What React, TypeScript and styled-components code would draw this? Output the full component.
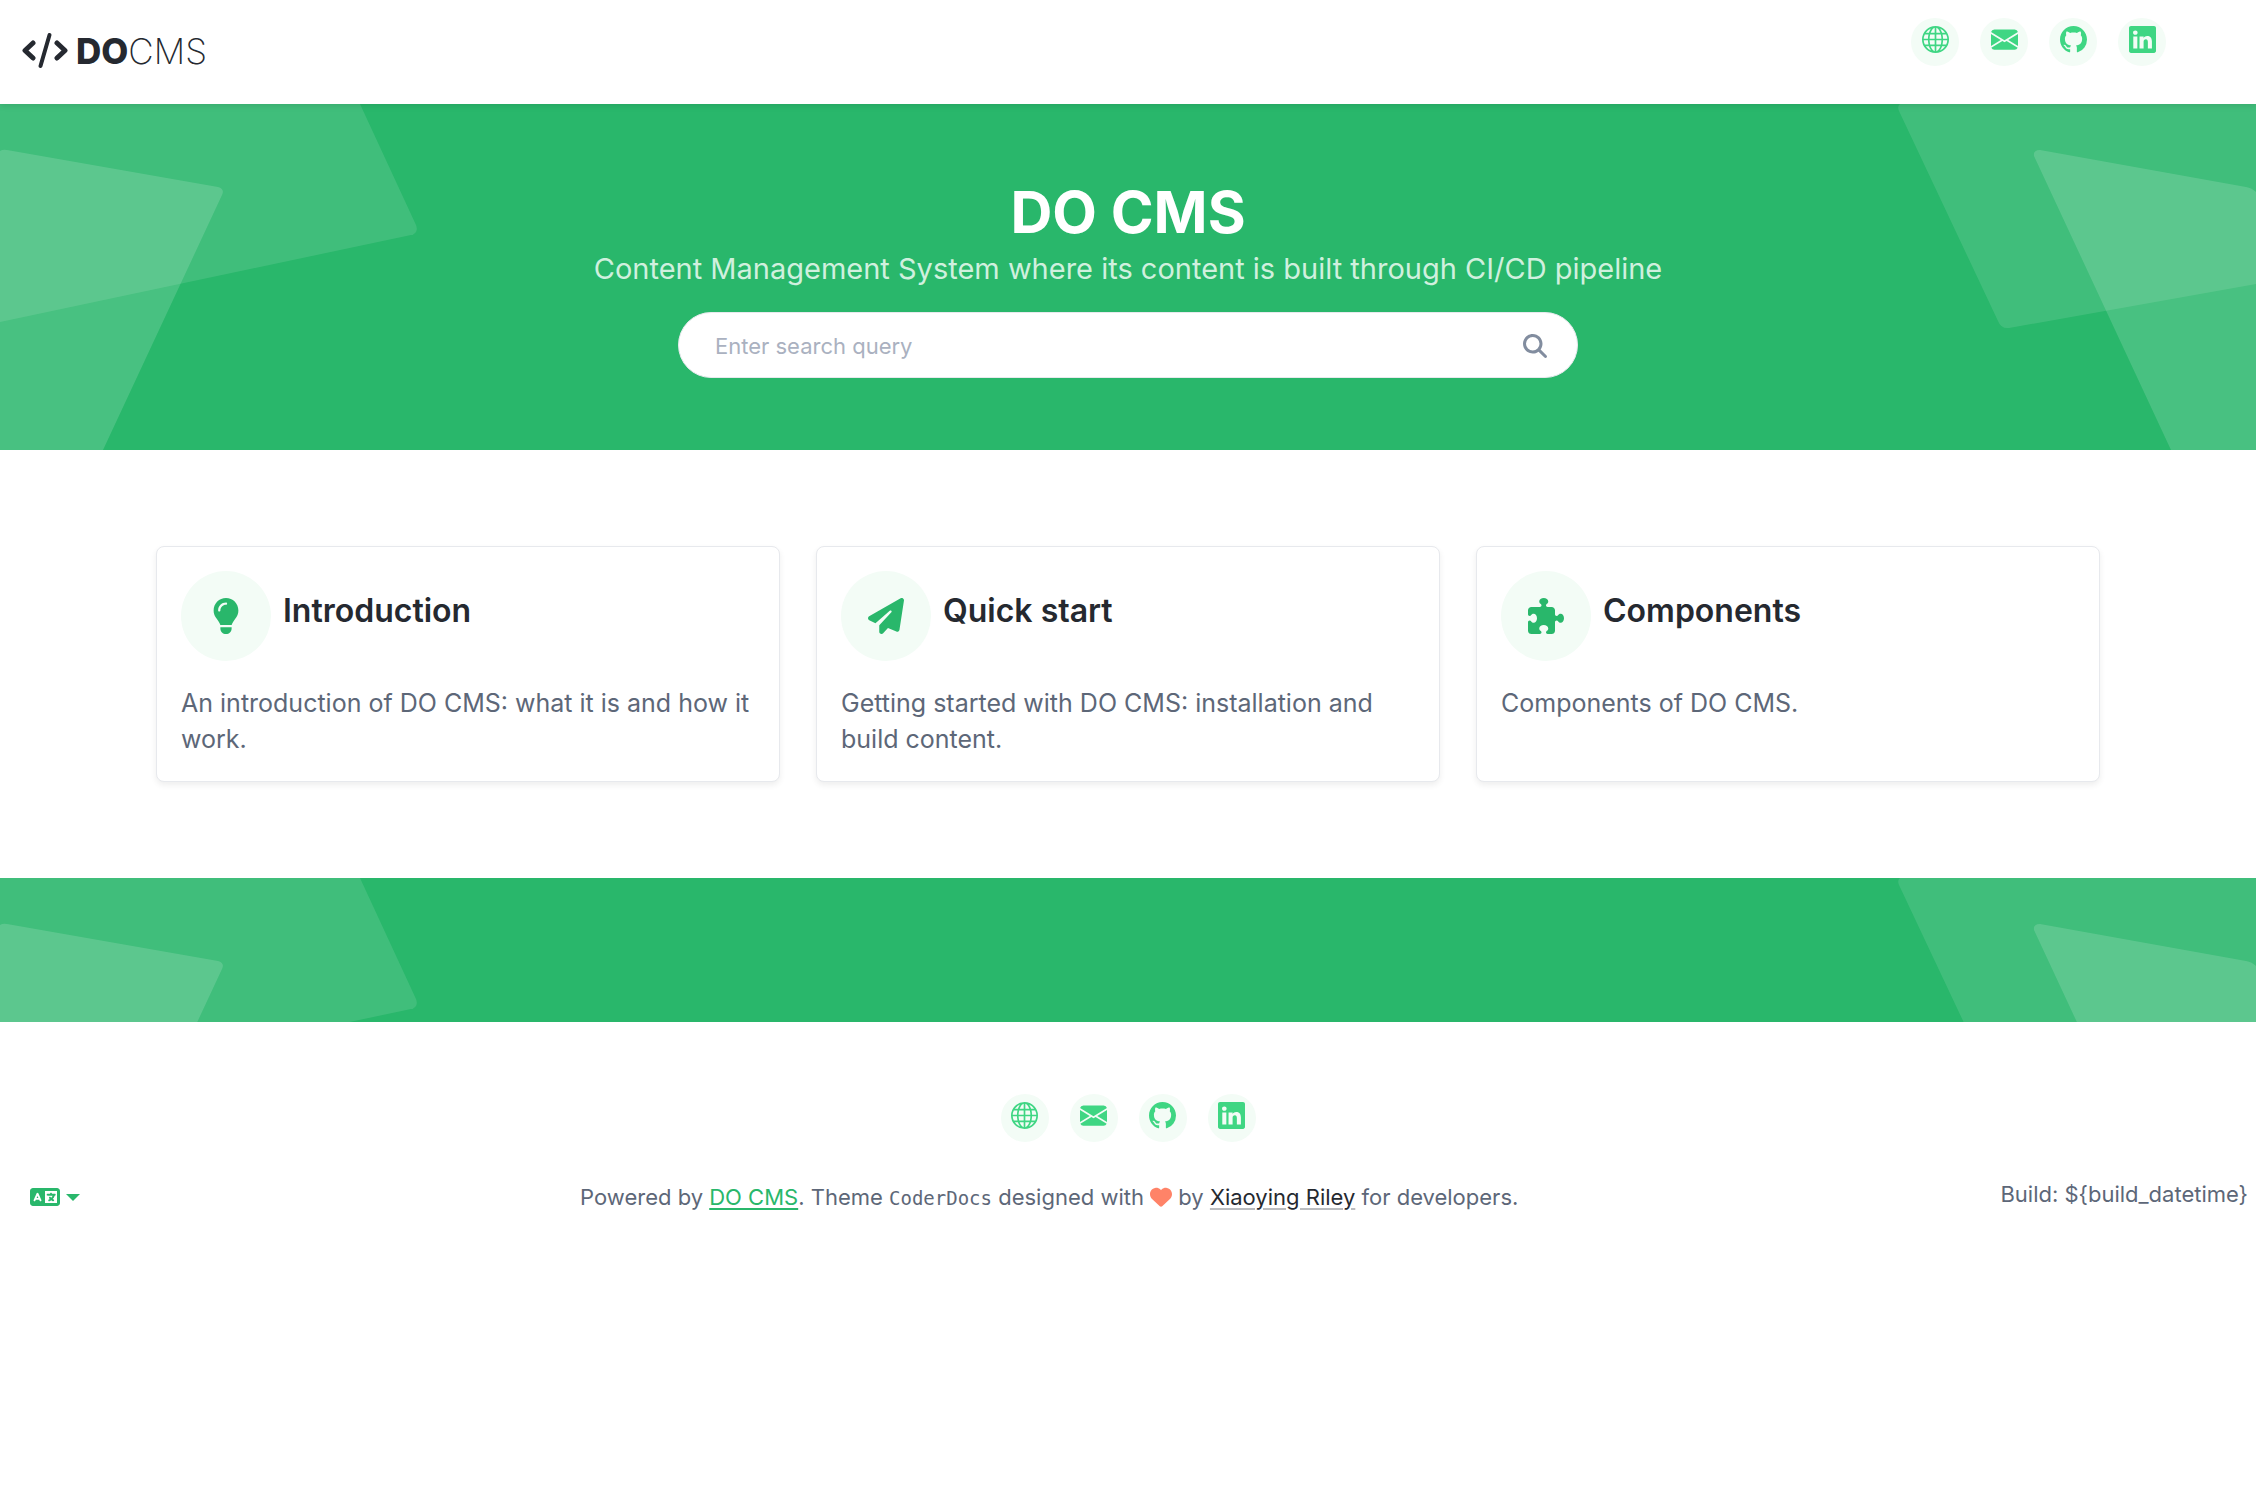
import React from "react";
import styled, { createGlobalStyle } from "styled-components";
import { BsEnvelopeFill, BsGithub, BsGlobe, BsLinkedin } from "react-icons/bs";
import {
  FaHeart,
  FaLanguage,
  FaLightbulb,
  FaMagnifyingGlass,
  FaPaperPlane,
  FaPuzzlePiece,
} from "react-icons/fa6";

const color = {
  green: "#29b76b",
  mint: "#3fd683",
  pale: "#f3fcf6",
  ink: "#252930",
  text: "#5d6778",
};

const GlobalStyle = createGlobalStyle`
  *, *::before, *::after { box-sizing: border-box; }
  body {
    margin: 0;
    background: #fff;
    color: ${color.text};
    font-family: Inter, "Open Sans", sans-serif;
    font-size: 25px;
    line-height: 36px;
  }
  h1, h2, p, ul { margin: 0; padding: 0; }
`;

const Header = styled.header`
  position: relative;
  z-index: 1;
  display: flex;
  align-items: flex-start;
  justify-content: space-between;
  height: 104px;
  padding: 18px 90px 0 22px;
  background: #fff;
  box-shadow: 0 2px 6px rgba(0, 0, 0, 0.1);
`;

const Brand = styled.a`
  display: flex;
  align-items: center;
  gap: 8px;
  margin-top: 14px;
  color: ${color.ink};
  font-size: 35px;
  font-weight: 200;
  line-height: 38px;
  text-decoration: none;

  svg { display: block; }
`;

const BrandStrong = styled.span`
  font-weight: 800;
`;

const SocialList = styled.ul`
  display: flex;
  gap: 21px;
  list-style: none;
`;

const SocialLink = styled.a`
  display: flex;
  justify-content: center;
  width: 48px;
  height: 48px;
  padding-top: 8px;
  border-radius: 50%;
  background: ${color.pale};
  color: ${color.mint};
  font-size: 27px;
`;

const Band = styled.section<{ $tall?: boolean }>`
  position: relative;
  display: flex;
  flex-direction: column;
  align-items: center;
  min-height: ${(p) => (p.$tall ? "346px" : "144px")};
  padding: ${(p) => (p.$tall ? "72px 24px" : "0")};
  overflow: hidden;
  background: ${color.green};
`;

const Shapes = styled.svg<{ $side: "left" | "right" }>`
  position: absolute;
  top: 0;
  ${(p) => p.$side}: 0;
  fill: #fff;
`;

const Title = styled.h1`
  position: relative;
  color: #fff;
  font-size: 58px;
  font-weight: 700;
  line-height: 72px;
`;

const Tagline = styled.p`
  position: relative;
  color: #d0f0de;
  font-size: 29px;
  line-height: 42px;
`;

const SearchForm = styled.form`
  position: relative;
  display: flex;
  align-items: center;
  width: 100%;
  max-width: 900px;
  height: 66px;
  margin-top: 22px;
  padding: 2px 30px 0 36px;
  border: 1px solid #e7e9ed;
  border-radius: 33px;
  background: #fff;
`;

const SearchInput = styled.input`
  flex: 1;
  min-width: 0;
  padding: 0;
  border: 0;
  outline: 0;
  background: none;
  color: ${color.text};
  font: inherit;
  font-size: 22px;

  &::placeholder { color: #aab1c0; opacity: 1; }
`;

const SearchButton = styled.button`
  display: flex;
  padding: 0;
  border: 0;
  background: none;
  color: #828d9f;
  font-size: 24px;
  cursor: pointer;
`;

const Cards = styled.main`
  display: grid;
  grid-template-columns: repeat(3, 1fr);
  gap: 36px;
  max-width: 1992px;
  margin: 0 auto;
  padding: 96px 24px;
`;

const Card = styled.article`
  padding: 24px;
  border: 1px solid #e7e9ed;
  border-radius: 8px;
  background: #fff;
  box-shadow: 0 3px 6px rgba(0, 0, 0, 0.07);
`;

const CardHead = styled.div`
  display: flex;
  align-items: flex-start;
  gap: 12px;
  margin-bottom: 24px;
`;

const CardIcon = styled.span`
  display: flex;
  flex: none;
  align-items: center;
  justify-content: center;
  width: 90px;
  height: 90px;
  border-radius: 50%;
  background: ${color.pale};
  color: ${color.green};
  font-size: 36px;
`;

const CardTitle = styled.h2`
  padding-top: 22px;
  color: ${color.ink};
  font-size: 32px;
  font-weight: 600;
  line-height: 36px;
`;

const Footer = styled.footer`
  display: flex;
  flex-direction: column;
  align-items: center;
  padding-top: 72px;
`;

const FooterRow = styled.div`
  display: flex;
  align-items: center;
  justify-content: space-between;
  width: 100%;
  margin-top: 34px;
  padding: 0 8px 0 12px;
  font-size: 22px;
`;

const LanguageButton = styled.button`
  display: flex;
  align-items: center;
  gap: 6px;
  padding: 6px 18px;
  border: 0;
  background: none;
  color: ${color.green};
  cursor: pointer;
`;

const Caret = styled.span`
  border: 7px solid transparent;
  border-top-color: currentColor;
  border-bottom: 0;
`;

const Code = styled.code`
  font-family: "DejaVu Sans Mono", monospace;
  font-size: 19px;
`;

const Heart = styled(FaHeart)`
  color: #ff8368;
  vertical-align: -3px;
`;

const TextLink = styled.a<{ $dark?: boolean }>`
  color: ${(p) => (p.$dark ? color.ink : color.green)};
  text-decoration: underline;
  text-decoration-color: ${(p) => (p.$dark ? "#bbbdc0" : color.green)};
  text-decoration-thickness: 2px;
  text-underline-offset: 3px;
`;

const Build = styled.p`
  margin-bottom: 6px;
`;

const socials = [
  { label: "Website", icon: <BsGlobe /> },
  { label: "Email", icon: <BsEnvelopeFill /> },
  { label: "GitHub", icon: <BsGithub /> },
  { label: "LinkedIn", icon: <BsLinkedin /> },
];

const sections = [
  {
    title: "Introduction",
    icon: <FaLightbulb />,
    text: "An introduction of DO CMS: what it is and how it work.",
  },
  {
    title: "Quick start",
    icon: <FaPaperPlane />,
    text: "Getting started with DO CMS: installation and build content.",
  },
  { title: "Components", icon: <FaPuzzlePiece />, text: "Components of DO CMS." },
];

const Socials = () => (
  <SocialList>
    {socials.map((s) => (
      <li key={s.label}>
        <SocialLink href="#" aria-label={s.label}>
          {s.icon}
        </SocialLink>
      </li>
    ))}
  </SocialList>
);

const BandShapes = () => (
  <>
    <Shapes $side="left" width="420" height="346" aria-hidden="true">
      <path opacity="0.11" d="M0 0H360L416 121Q419 129 411 131L0 218Z" />
      <path opacity="0.15" d="M0 47Q3 45 7 46L218 83Q225 85 222 91L103 346H0Z" />
    </Shapes>
    <Shapes $side="right" width="400" height="346" aria-hidden="true">
      <path opacity="0.11" d="M44 0Q41 2 43 7L142 217Q145 225 153 224L400 180V0Z" />
      <path opacity="0.15" d="M178 52Q177 46 184 46L390 83Q396 84 400 88V346H315Z" />
    </Shapes>
  </>
);

export default function App() {
  return (
    <>
      <GlobalStyle />
      <Header>
        <Brand href="#">
          <svg
            width="46"
            height="38"
            viewBox="0 0 46 38"
            fill="none"
            stroke="currentColor"
            strokeWidth="4"
            strokeLinecap="round"
            strokeLinejoin="round"
            aria-hidden="true"
          >
            <path strokeWidth="5" d="M11 11L3 18.500L11 26M35 11L43 18.500L35 26" />
            <path d="M27.500 3L18.500 34" />
          </svg>
          <span>
            <BrandStrong>DO</BrandStrong>CMS
          </span>
        </Brand>
        <Socials />
      </Header>

      <Band $tall>
        <BandShapes />
        <Title>DO CMS</Title>
        <Tagline>
          Content Management System where its content is built through CI/CD pipeline
        </Tagline>
        <SearchForm role="search" onSubmit={(e) => e.preventDefault()}>
          <SearchInput type="text" aria-label="Search" placeholder="Enter search query" />
          <SearchButton type="submit" aria-label="Search">
            <FaMagnifyingGlass />
          </SearchButton>
        </SearchForm>
      </Band>

      <Cards>
        {sections.map((s) => (
          <Card key={s.title}>
            <CardHead>
              <CardIcon>{s.icon}</CardIcon>
              <CardTitle>{s.title}</CardTitle>
            </CardHead>
            <p>{s.text}</p>
          </Card>
        ))}
      </Cards>

      <Band>
        <BandShapes />
      </Band>

      <Footer>
        <Socials />
        <FooterRow>
          <LanguageButton type="button" aria-label="Language">
            <FaLanguage size={30} />
            <Caret />
          </LanguageButton>
          <p>
            Powered by <TextLink href="#">DO CMS</TextLink>. Theme <Code>CoderDocs</Code> designed
            with <Heart /> by{" "}
            <TextLink href="#" $dark>
              Xiaoying Riley
            </TextLink>{" "}
            for developers.
          </p>
          <Build>{"Build: ${build_datetime}"}</Build>
        </FooterRow>
      </Footer>
    </>
  );
}
